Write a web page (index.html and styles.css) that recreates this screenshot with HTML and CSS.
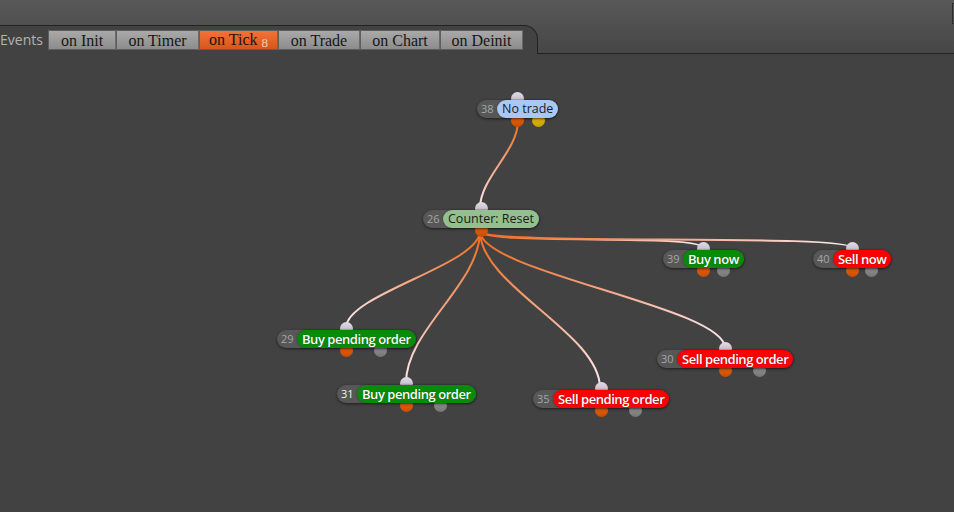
FILE: index.html
```html
<!doctype html>
<html>
	<head>
		<title>Events Editor</title>
		<link rel="stylesheet" href="styles.css">
	</head>

	<body>
		<div class="header">
			<div class="topbar">
				<span class="corner-box"></span>
			</div>
			<div class="tabstrip">
				<div class="tab-panel">
					<span class="events-label">Events</span>
					<div class="event-buttons">
						<button class="event-btn btn-init">on Init</button>
						<button class="event-btn btn-timer">on Timer</button>
						<button class="event-btn btn-tick active">on Tick <span class="tick-count">8</span></button>
						<button class="event-btn btn-trade">on Trade</button>
						<button class="event-btn btn-chart">on Chart</button>
						<button class="event-btn btn-deinit">on Deinit</button>
					</div>
				</div>
				<div class="tab-filler"></div>
			</div>
		</div>

		<div class="canvas">
			<svg class="edges" width="954" height="458" viewBox="0 54 954 458" xmlns="http://www.w3.org/2000/svg">
				<defs>
					<linearGradient id="e1" gradientUnits="userSpaceOnUse" x1="518" y1="121" x2="480" y2="208">
						<stop offset="0" stop-color="#f26b1d" />
						<stop offset="0.5" stop-color="#f5a582" />
						<stop offset="1" stop-color="#fbe9ee" />
					</linearGradient>
					<linearGradient id="e2" gradientUnits="userSpaceOnUse" x1="480" y1="231" x2="703" y2="248">
						<stop offset="0" stop-color="#f26b1d" />
						<stop offset="0.5" stop-color="#f5a582" />
						<stop offset="1" stop-color="#fbe9ee" />
					</linearGradient>
					<linearGradient id="e3" gradientUnits="userSpaceOnUse" x1="480" y1="231" x2="852" y2="248">
						<stop offset="0" stop-color="#f26b1d" />
						<stop offset="0.5" stop-color="#f5a582" />
						<stop offset="1" stop-color="#fbe9ee" />
					</linearGradient>
					<linearGradient id="e4" gradientUnits="userSpaceOnUse" x1="480" y1="231" x2="346" y2="328">
						<stop offset="0" stop-color="#f26b1d" />
						<stop offset="0.5" stop-color="#f5a582" />
						<stop offset="1" stop-color="#fbe9ee" />
					</linearGradient>
					<linearGradient id="e5" gradientUnits="userSpaceOnUse" x1="480" y1="231" x2="406" y2="383">
						<stop offset="0" stop-color="#f26b1d" />
						<stop offset="0.5" stop-color="#f5a582" />
						<stop offset="1" stop-color="#fbe9ee" />
					</linearGradient>
					<linearGradient id="e6" gradientUnits="userSpaceOnUse" x1="480" y1="231" x2="600" y2="388">
						<stop offset="0" stop-color="#f26b1d" />
						<stop offset="0.5" stop-color="#f5a582" />
						<stop offset="1" stop-color="#fbe9ee" />
					</linearGradient>
					<linearGradient id="e7" gradientUnits="userSpaceOnUse" x1="480" y1="231" x2="725" y2="348">
						<stop offset="0" stop-color="#f26b1d" />
						<stop offset="0.5" stop-color="#f5a582" />
						<stop offset="1" stop-color="#fbe9ee" />
					</linearGradient>
				</defs>
				<path class="edge" stroke="url(#e1)" d="M518 121 C518 151 480 178 480 208" />
				<path class="edge" stroke="url(#e2)" d="M480 231 C480 246 703 233 703 248" />
				<path class="edge" stroke="url(#e3)" d="M480 231 C480 246 852 233 852 248" />
				<path class="edge" stroke="url(#e4)" d="M480 231 C480 265 346 294 346 328" />
				<path class="edge" stroke="url(#e5)" d="M480 231 C480 284 406 330 406 383" />
				<path class="edge" stroke="url(#e6)" d="M480 231 C480 286 600 333 600 388" />
				<path class="edge" stroke="url(#e7)" d="M480 231 C480 272 725 307 725 348" />
			</svg>

			<div class="node" style="left: 477px; top: 46px">
				<span class="port port-in"></span>
				<span class="port port-out"></span>
				<span class="port port-out port-alt port-yellow"></span>
				<div class="pill">
					<span class="node-num">38</span>
					<span class="node-label label-info">No trade</span>
				</div>
			</div>

			<div class="node" style="left: 423px; top: 156px">
				<span class="port port-in"></span>
				<span class="port port-out"></span>
				<div class="pill">
					<span class="node-num">26</span>
					<span class="node-label label-calc">Counter: Reset</span>
				</div>
			</div>

			<div class="node" style="left: 663px; top: 196px">
				<span class="port port-in"></span>
				<span class="port port-out"></span>
				<span class="port port-out port-alt"></span>
				<div class="pill">
					<span class="node-num">39</span>
					<span class="node-label label-buy">Buy now</span>
				</div>
			</div>

			<div class="node" style="left: 813px; top: 196px">
				<span class="port port-in"></span>
				<span class="port port-out"></span>
				<span class="port port-out port-alt"></span>
				<div class="pill">
					<span class="node-num">40</span>
					<span class="node-label label-sell">Sell now</span>
				</div>
			</div>

			<div class="node" style="left: 277px; top: 276px">
				<span class="port port-in"></span>
				<span class="port port-out"></span>
				<span class="port port-out port-alt"></span>
				<div class="pill">
					<span class="node-num">29</span>
					<span class="node-label label-buy">Buy pending order</span>
				</div>
			</div>

			<div class="node" style="left: 657px; top: 296px">
				<span class="port port-in"></span>
				<span class="port port-out"></span>
				<span class="port port-out port-alt"></span>
				<div class="pill">
					<span class="node-num">30</span>
					<span class="node-label label-sell">Sell pending order</span>
				</div>
			</div>

			<div class="node" style="left: 337px; top: 331px">
				<span class="port port-in"></span>
				<span class="port port-out"></span>
				<span class="port port-out port-alt"></span>
				<div class="pill">
					<span class="node-num selected">31</span>
					<span class="node-label label-buy">Buy pending order</span>
				</div>
			</div>

			<div class="node" style="left: 533px; top: 336px">
				<span class="port port-in"></span>
				<span class="port port-out"></span>
				<span class="port port-out port-alt"></span>
				<div class="pill">
					<span class="node-num">35</span>
					<span class="node-label label-sell">Sell pending order</span>
				</div>
			</div>
		</div>
	</body>
</html>
```

FILE: styles.css
```css
body {
	margin: 0px;
	width: 954px;
	height: 512px;
	overflow: hidden;
	background-color: #424242;
	font-family: "Open Sans", "Noto Sans", sans-serif;
}

/* top bar with the events tab */
.header {
	height: 54px;
	background: linear-gradient(#585858, #464646);
}

.topbar {
	height: 25px;
	display: flex;
	justify-content: flex-end;
	overflow: hidden;
}

.corner-box {
	width: 8px;
	height: 21px;
	margin-top: 3px;
	margin-right: -6px;
	border: 1px solid #2e2e2e;
	box-sizing: border-box;
}

.tabstrip {
	display: flex;
	height: 29px;
}

.tab-panel {
	display: flex;
	align-items: flex-start;
	height: 29px;
	box-sizing: border-box;
	padding-top: 4px;
	padding-right: 14px;
	background-color: #424242;
	border-top: 1px solid #232323;
	border-right: 1px solid #232323;
	border-top-right-radius: 14px;
}

.events-label {
	width: 48px;
	font-size: 14px;
	line-height: 19px;
	color: #b2b2b2;
}

.event-buttons {
	display: flex;
}

.event-btn {
	height: 20px;
	box-sizing: border-box;
	padding: 0;
	border: 1px solid #5e5e5e;
	border-right-color: #6a6a6a;
	background: linear-gradient(#a9a9a9, #8c8c8c);
	font-family: "Liberation Serif", serif;
	font-size: 16px;
	line-height: 17px;
	color: #161616;
	text-align: center;
}

.event-btn.active {
	background: linear-gradient(#f27238, #d6561c);
	color: #241408;
}

.tick-count {
	font-size: 13px;
	color: #f6cdb0;
	position: relative;
	top: 2px;
}

.btn-init { width: 68px; }
.btn-timer { width: 83px; }
.btn-tick { width: 79px; }
.btn-trade { width: 82px; }
.btn-chart { width: 80px; }
.btn-deinit { width: 83px; }

.tab-filler {
	flex: 1;
	border-bottom: 1px solid #232323;
}

/* node canvas */
.canvas {
	position: relative;
	height: 458px;
}

.edges {
	position: absolute;
	left: 0;
	top: 0;
}

.edge {
	fill: none;
	stroke-width: 2;
}

.node {
	position: absolute;
}

.pill {
	position: relative;
	z-index: 2;
	display: flex;
	align-items: center;
	height: 18px;
	border-radius: 9px;
	background-color: #575757;
	box-shadow: 0 1px 3px rgba(0, 0, 0, 0.55);
}

.node-num {
	width: 20px;
	box-sizing: border-box;
	padding-left: 4px;
	font-size: 11px;
	line-height: 18px;
	color: #a6a6a6;
}

.node-num.selected {
	color: #f2f2f2;
}

.node-label {
	height: 18px;
	line-height: 18px;
	padding: 0 5px;
	border-radius: 9px;
	font-size: 12.5px;
	white-space: nowrap;
	box-shadow: 0 0 2px rgba(0, 0, 0, 0.4);
}

.label-info {
	background-color: #a9c8f6;
	color: #1c1c1c;
}

.label-calc {
	background-color: #93c08e;
	color: #1c1c1c;
}

.label-buy,
.label-sell {
	font-size: 13px;
	color: #ffffff;
	font-weight: 600;
	letter-spacing: -0.45px;
	text-shadow: 0 0 1px rgba(0, 0, 0, 0.5);
}

.label-buy {
	background-color: #0a8a0a;
}

.label-sell {
	background-color: #fb0000;
}

/* connectors sit behind the pill */
.port {
	position: absolute;
	z-index: 1;
	left: calc(50% - 6.5px);
	width: 13px;
	height: 13px;
	border-radius: 50%;
}

.port-in {
	top: -8px;
	background: linear-gradient(#e2dbe8, #b3abbb);
}

.port-out {
	bottom: -9px;
	background: linear-gradient(#ee6a12, #c94c00);
}

.port-alt {
	left: calc(75% - 6.5px);
	background: linear-gradient(#9a9a9a, #767676);
}

.port-yellow {
	background: linear-gradient(#e9c400, #c9a000);
}
```
